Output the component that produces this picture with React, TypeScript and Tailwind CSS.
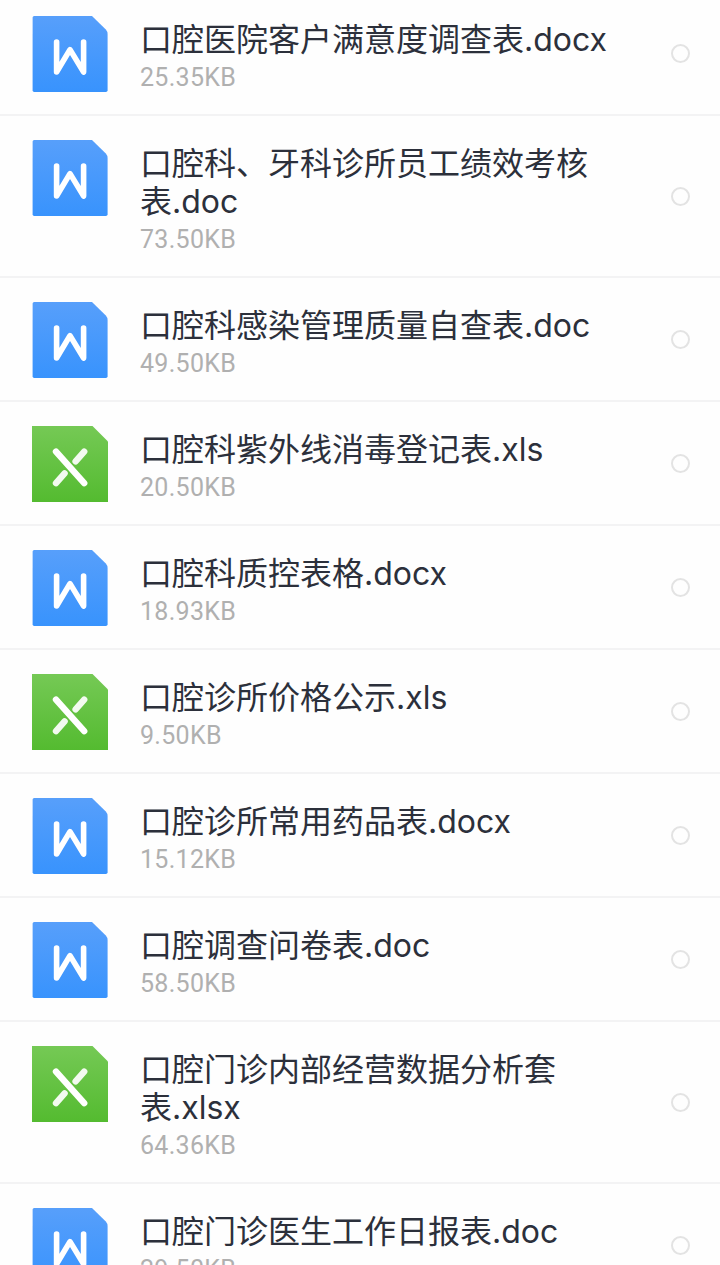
type FileKind = "word" | "excel";

type FileItem = {
  id: number;
  name: string;
  size: string;
  kind: FileKind;
};

const FILES: FileItem[] = [
  { id: 1, name: "口腔医院客户满意度调查表.docx", size: "25.35KB", kind: "word" },
  { id: 2, name: "口腔科、牙科诊所员工绩效考核表.doc", size: "73.50KB", kind: "word" },
  { id: 3, name: "口腔科感染管理质量自查表.doc", size: "49.50KB", kind: "word" },
  { id: 4, name: "口腔科紫外线消毒登记表.xls", size: "20.50KB", kind: "excel" },
  { id: 5, name: "口腔科质控表格.docx", size: "18.93KB", kind: "word" },
  { id: 6, name: "口腔诊所价格公示.xls", size: "9.50KB", kind: "excel" },
  { id: 7, name: "口腔诊所常用药品表.docx", size: "15.12KB", kind: "word" },
  { id: 8, name: "口腔调查问卷表.doc", size: "58.50KB", kind: "word" },
  { id: 9, name: "口腔门诊内部经营数据分析套表.xlsx", size: "64.36KB", kind: "excel" },
  { id: 10, name: "口腔门诊医生工作日报表.doc", size: "29.50KB", kind: "word" },
];

function WordIcon() {
  return (
    <svg viewBox="0 0 76 76" className="size-[76px] shrink-0" aria-hidden="true">
      <defs>
        <linearGradient id="word-fill" x1="0" y1="0" x2="0" y2="1">
          <stop offset="0" stopColor="#579ffb" />
          <stop offset="1" stopColor="#3893fd" />
        </linearGradient>
      </defs>
      <path
        d="M2.2 0H60L73.8 13.4Q75.6 15.4 75.6 18V74.2Q75.6 76 73.8 76H2.2Q.6 76 .6 74.2V1.8Q.6 0 2.2 0Z"
        fill="url(#word-fill)"
      />
      <path
        d="M24.6 26V56L38 33.6L51.6 56V26"
        fill="none"
        stroke="#fff"
        strokeWidth="5.6"
        strokeLinecap="round"
        strokeLinejoin="round"
      />
    </svg>
  );
}

function ExcelIcon() {
  return (
    <svg viewBox="0 0 76 76" className="size-[76px] shrink-0" aria-hidden="true">
      <defs>
        <linearGradient id="excel-fill" x1="0" y1="0" x2="0" y2="1">
          <stop offset="0" stopColor="#75c955" />
          <stop offset="1" stopColor="#54bb30" />
        </linearGradient>
      </defs>
      <path d="M0 0H60.5L76 15.5V76H0Z" fill="url(#excel-fill)" />
      <g fill="none" stroke="#fff" strokeWidth="6.4" strokeLinecap="round">
        <path d="M24 25.6L52.2 57.2" />
        <path d="M52.2 25.6L43.6 35.4" strokeOpacity=".92" />
        <path d="M24 57.2L32.6 47.4" strokeOpacity=".92" />
      </g>
    </svg>
  );
}

function FileRow({ file }: { file: FileItem }) {
  return (
    <li className="flex shrink-0 items-start border-b-2 border-[#f3f3f4] pt-6 pb-[22px] pl-8 pr-[30px]">
      {file.kind === "word" ? <WordIcon /> : <ExcelIcon />}

      <div className="ml-8 mt-[5px] w-[474px]">
        <p className="text-[32px] leading-[38px] text-[#2c303b]">
          {file.name}
        </p>
        <p className="mt-[5px] font-['Roboto','Liberation_Sans',sans-serif] text-[25px] leading-[28px] tracking-[0.3px] text-[#b0b0b0]">
          {file.size}
        </p>
      </div>

      {/* Selection circle */}
      <button
        type="button"
        aria-label={`选择 ${file.name}`}
        className="mb-0.5 ml-auto size-[19px] self-center rounded-full border-2 border-[#e3e3e3]"
      />
    </li>
  );
}

export default function App() {
  return (
    <main className="h-screen overflow-hidden bg-[#fefefe] font-['Inter','Noto_Sans_CJK_SC',sans-serif]">
      <ul className="-mt-2 flex flex-col">
        {FILES.map((file) => (
          <FileRow key={file.id} file={file} />
        ))}
      </ul>
    </main>
  );
}
